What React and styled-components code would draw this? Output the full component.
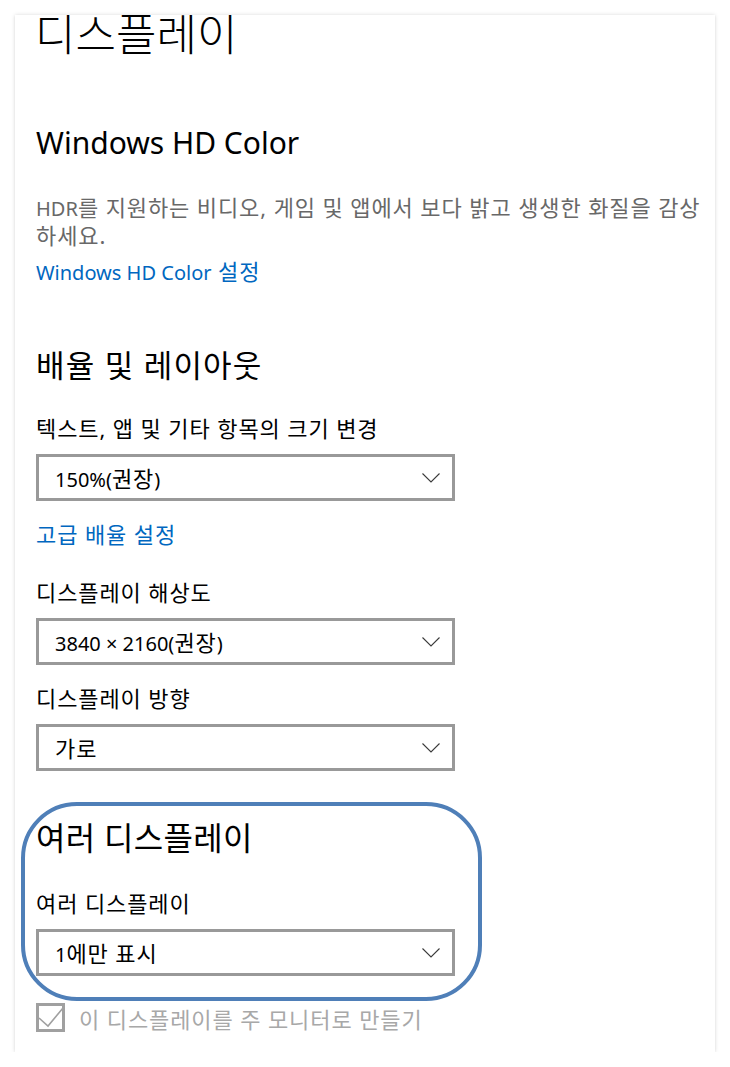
import React from 'react';
import styled, { createGlobalStyle } from 'styled-components';

const GlobalStyle = createGlobalStyle`
  html, body {
    margin: 0;
    padding: 0;
    background: #ffffff;
  }
  body {
    font-family: "Noto Sans", "Noto Sans CJK KR", sans-serif;
    color: #000;
  }
`;

// 바깥 카드 (설정 창 본문)
const Card = styled.div`
  margin: 15px 15px 0 15px;
  width: 700px;
  height: 1037px;
  box-sizing: border-box;
  padding: 0 10px 0 21px;
  background: #fff;
  box-shadow: 0 0 4px rgba(0, 0, 0, 0.14), 0 1px 2px rgba(0, 0, 0, 0.06);
  overflow: hidden;
`;

// 한글은 라틴 글자보다 조금 크게, 자간을 넓게 -> 라틴 구간만 따로
const Lat = styled.span`
  font-size: 20px;
  line-height: 1;
  letter-spacing: 0;
`;

const PageTitle = styled.h1`
  margin: 0 0 0 -1px;
  font-size: 44px;
  line-height: 38px;
  font-weight: 300;
`;

const SectionTitle = styled.h2`
  margin: ${p => p.$top || 0}px 0 0 0;
  font-size: ${p => p.$size || 31}px;
  line-height: 40px;
  font-weight: 400;
  letter-spacing: ${p => p.$spacing || 0}px;
`;

const Description = styled.p`
  margin: 30px 0 0 0;
  font-size: 22px;
  line-height: 28px;
  letter-spacing: 0.9px;
  color: #686868;
`;

const TextLink = styled.a`
  display: block;
  margin-top: ${p => p.$top || 0}px;
  font-size: 22px;
  line-height: 28px;
  letter-spacing: 0.9px;
  color: #0067c0;
  text-decoration: none;
`;

const Label = styled.div`
  margin-top: ${p => p.$top || 0}px;
  font-size: 22px;
  line-height: 28px;
  letter-spacing: 0.9px;
`;

const Select = styled.div`
  margin-top: 12px;
  width: 419px;
  height: 47px;
  box-sizing: border-box;
  border: 3px solid #999999;
  display: flex;
  align-items: center;
  justify-content: space-between;
  padding: 0 12px 0 16px;
  font-size: 22px;
  line-height: 28px;
  letter-spacing: 0.9px;
`;

const Chevron = () => (
  <svg width="18" height="10" viewBox="0 0 18 10">
    <polyline points="0.5,0.5 9,9 17.5,0.5" fill="none" stroke="#3a3a3a" strokeWidth="1.1" />
  </svg>
);

const MultiSection = styled.div`
  position: relative;
  padding-top: 47px;
`;

// 파란 강조 테두리 (스크린샷 위에 그려진 주석)
const Highlight = styled.div`
  position: absolute;
  left: -15px;
  top: 31px;
  width: 461px;
  height: 199px;
  box-sizing: border-box;
  border: 4px solid #4f7fb8;
  border-radius: 56px;
  pointer-events: none;
`;

const CheckRow = styled.div`
  margin-top: 27px;
  height: 29px;
  display: flex;
  align-items: center;
  gap: 14px;
  font-size: 22px;
  letter-spacing: 0.9px;
  color: #a8a8a8;
`;

const CheckBox = styled.div`
  width: 29px;
  height: 29px;
  flex: none;
  box-sizing: border-box;
  border: 3px solid #a0a0a0;

  svg {
    display: block;
    overflow: visible;
  }
`;

const Dropdown = ({ children }) => (
  <Select>
    <span>{children}</span>
    <Chevron />
  </Select>
);

export default function App() {
  return (
    <>
      <GlobalStyle />
      <Card>
        <PageTitle>디스플레이</PageTitle>

        <SectionTitle $top={70} $size={30}>Windows HD Color</SectionTitle>
        <Description>
          <Lat>HDR</Lat>를 지원하는 비디오, 게임 및 앱에서 보다 밝고 생생한 화질을 감상하세요.
        </Description>
        <TextLink $top={8}>
          <Lat>Windows HD Color</Lat> 설정
        </TextLink>

        <SectionTitle $top={60} $spacing={1.2}>배율 및 레이아웃</SectionTitle>
        <Label $top={29}>텍스트, 앱 및 기타 항목의 크기 변경</Label>
        <Dropdown>
          <Lat>150%(</Lat>권장<Lat>)</Lat>
        </Dropdown>
        <TextLink $top={19}>고급 배율 설정</TextLink>

        <Label $top={30}>디스플레이 해상도</Label>
        <Dropdown>
          <Lat>3840 × 2160(</Lat>권장<Lat>)</Lat>
        </Dropdown>
        <Label $top={19}>디스플레이 방향</Label>
        <Dropdown>가로</Dropdown>

        <MultiSection>
          <Highlight />
          <SectionTitle $size={32} $spacing={0.3}>여러 디스플레이</SectionTitle>
          <Label $top={31}>여러 디스플레이</Label>
          <Dropdown>
            <Lat>1</Lat>에만 표시
          </Dropdown>
        </MultiSection>

        <CheckRow>
          <CheckBox>
            <svg width="23" height="23" viewBox="0 0 23 23">
              <polyline points="0,12 9,20 24,2" fill="none" stroke="#a0a0a0" strokeWidth="1.6" />
            </svg>
          </CheckBox>
          <span>이 디스플레이를 주 모니터로 만들기</span>
        </CheckRow>
      </Card>
    </>
  );
}
